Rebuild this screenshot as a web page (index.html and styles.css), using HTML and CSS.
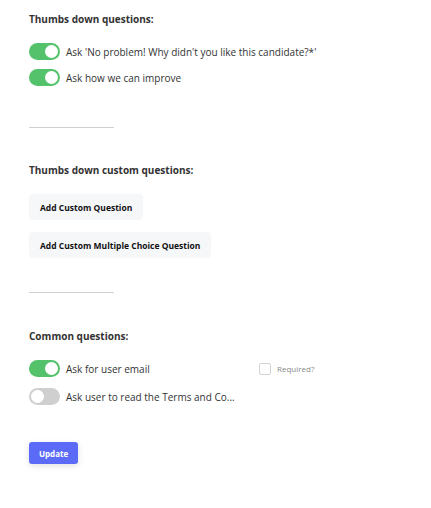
FILE: index.html
```html
<!DOCTYPE html>
<html>
<head>
<meta charset="utf-8">
<link rel="stylesheet" href="styles.css">
</head>
<body>
<div class="page">
  <section class="section">
    <h3 class="heading">Thumbs down questions:</h3>
    <div class="rows">
      <div class="row"><span class="toggle on"><span class="knob"></span></span><span class="label">Ask 'No problem! Why didn't you like this candidate?*'</span></div>
      <div class="row"><span class="toggle on"><span class="knob"></span></span><span class="label">Ask how we can improve</span></div>
    </div>
  </section>
  <hr class="divider divider-first">
  <section class="section">
    <h3 class="heading">Thumbs down custom questions:</h3>
    <div class="buttons">
      <button class="btn-light">Add Custom Question</button>
      <button class="btn-light">Add Custom Multiple Choice Question</button>
    </div>
  </section>
  <hr class="divider divider-second">
  <section class="section">
    <h3 class="heading">Common questions:</h3>
    <div class="rows rows-wide">
      <div class="row"><span class="toggle on"><span class="knob"></span></span><span class="label label-fixed">Ask for user email</span><span class="check"></span><span class="req">Required?</span></div>
      <div class="row"><span class="toggle off"><span class="knob"></span></span><span class="label">Ask user to read the Terms and Co...</span></div>
    </div>
  </section>
  <button class="btn-primary">Update</button>
</div>
</body>
</html>
```
FILE: styles.css
```css
* { box-sizing: border-box; }
body {
  margin: 0;
  background: #fff;
  font-family: "Open Sans", "Liberation Sans", sans-serif;
  color: #333;
}
.page {
  padding: 12px 29px 40px;
  display: flex;
  flex-direction: column;
  align-items: flex-start;
}
.section { display: flex; flex-direction: column; align-items: flex-start; }
.heading {
  margin: 0;
  font-size: 10px;
  font-weight: 700;
  line-height: 14px;
  color: #333;
}
.rows {
  margin-top: 17px;
  display: flex;
  flex-direction: column;
  gap: 9px;
}
.rows-wide { gap: 11px; }
.row {
  display: flex;
  align-items: center;
  height: 17px;
}
.toggle {
  width: 31px;
  height: 17px;
  border-radius: 9px;
  position: relative;
  flex: none;
  margin-right: 6px;
}
.toggle.on { background: #53c26a; }
.toggle.off { background: #cfcfcf; }
.knob {
  position: absolute;
  top: 2px;
  width: 13px;
  height: 13px;
  border-radius: 50%;
  background: #fff;
}
.toggle.on .knob { right: 2px; }
.toggle.off .knob { left: 2px; }
.label {
  font-size: 10px;
  color: #333;
  white-space: nowrap;
}
.label-fixed { width: 193px; }
.check {
  width: 12px;
  height: 12px;
  border: 1px solid #d4d4d4;
  border-radius: 2px;
  margin-right: 6px;
}
.req {
  font-size: 8px;
  color: #8a8a8a;
}
.divider {
  width: 85px;
  border: 0;
  border-top: 1px solid #cfcfcf;
  height: 0;
}
.divider-first { margin: 41px 0 35px; }
.divider-second { margin: 34px 0 36px; }
.buttons {
  margin-top: 17px;
  display: flex;
  flex-direction: column;
  align-items: flex-start;
  gap: 12px;
}
.btn-light {
  font-family: inherit;
  font-size: 8.5px;
  font-weight: 700;
  color: #111;
  background: #f6f7f9;
  border: 0;
  border-radius: 4px;
  height: 26px;
  padding: 0 11px;
}
.btn-primary {
  margin-top: 37px;
  font-family: inherit;
  font-size: 8px;
  font-weight: 700;
  color: #fff;
  background: #5b6af7;
  border: 0;
  border-radius: 3px;
  height: 22px;
  padding: 0 10px;
  box-shadow: 0 2px 6px rgba(0,0,0,0.12);
}
```
